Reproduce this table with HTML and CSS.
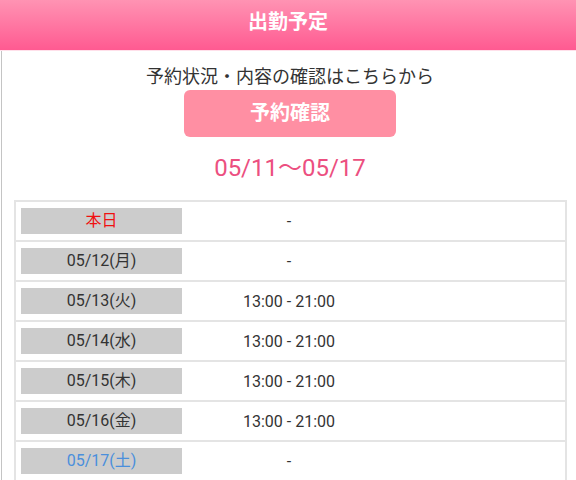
FILE: index.html
```html
<!DOCTYPE html>
<html lang="ja">
<head>
<meta charset="utf-8">
<title>出勤予定</title>
<link rel="stylesheet" href="styles.css">
</head>
<body>
<header class="page-header">
  <h1 class="page-title">出勤予定</h1>
</header>
<main class="content">
  <p class="lead">予約状況・内容の確認はこちらから</p>
  <a class="reserve-btn" href="#">予約確認</a>
  <p class="range">05/11～05/17</p>
  <div class="schedule">
    <div class="row"><span class="day today">本日</span><span class="time">-</span></div>
    <div class="row"><span class="day">05/12(月)</span><span class="time">-</span></div>
    <div class="row"><span class="day">05/13(火)</span><span class="time">13:00 - 21:00</span></div>
    <div class="row"><span class="day">05/14(水)</span><span class="time">13:00 - 21:00</span></div>
    <div class="row"><span class="day">05/15(木)</span><span class="time">13:00 - 21:00</span></div>
    <div class="row"><span class="day">05/16(金)</span><span class="time">13:00 - 21:00</span></div>
    <div class="row"><span class="day sat">05/17(土)</span><span class="time">-</span></div>
  </div>
</main>
</body>
</html>
```
FILE: styles.css
```css
html, body {
  margin: 0;
  padding: 0;
  background: #fff;
}
body {
  font-family: Roboto, "Noto Sans CJK JP", sans-serif;
  color: #333;
  overflow: hidden;
}
.page-header {
  height: 50px;
  background: linear-gradient(to bottom, #ff93b3 0%, #ff5a91 100%);
  border-bottom: 1px solid #ffe0ea;
}
.page-title {
  margin: 0;
  font-size: 20px;
  font-weight: bold;
  line-height: 44px;
  color: #fff;
  text-align: center;
}
.content {
  margin-left: 1px;
  border-left: 1px solid #c4c4c4;
  display: flex;
  flex-direction: column;
  align-items: center;
  padding-top: 14px;
  padding-left: 2px;
  min-height: 440px;
}
.lead {
  margin: 0;
  font-size: 18px;
  line-height: 24px;
  color: #333;
}
.reserve-btn {
  display: block;
  margin-top: 1px;
  width: 212px;
  height: 47px;
  line-height: 46px;
  border-radius: 6px;
  background: #ff8fa3;
  color: #fff;
  font-size: 20px;
  font-weight: bold;
  text-align: center;
  text-decoration: none;
}
.range {
  margin: 16px 0 0;
  font-size: 24px;
  line-height: 30px;
  color: #ec4f80;
}
.schedule {
  align-self: stretch;
  margin: 17px 9px 0 10px;
  border-left: 2px solid #e4e4e4;
  border-right: 2px solid #e4e4e4;
}
.row {
  display: flex;
  align-items: center;
  border-top: 2px solid #e4e4e4;
  padding: 6px 0 6px 5px;
}
.day {
  width: 161px;
  height: 26px;
  line-height: 26px;
  background: #cccccc;
  text-align: center;
  font-size: 16px;
  color: #333;
}
.day.today {
  color: #f01010;
}
.day.sat {
  color: #4a8fdc;
}
.time {
  width: 214px;
  text-align: center;
  font-size: 16px;
  color: #333;
}
```
